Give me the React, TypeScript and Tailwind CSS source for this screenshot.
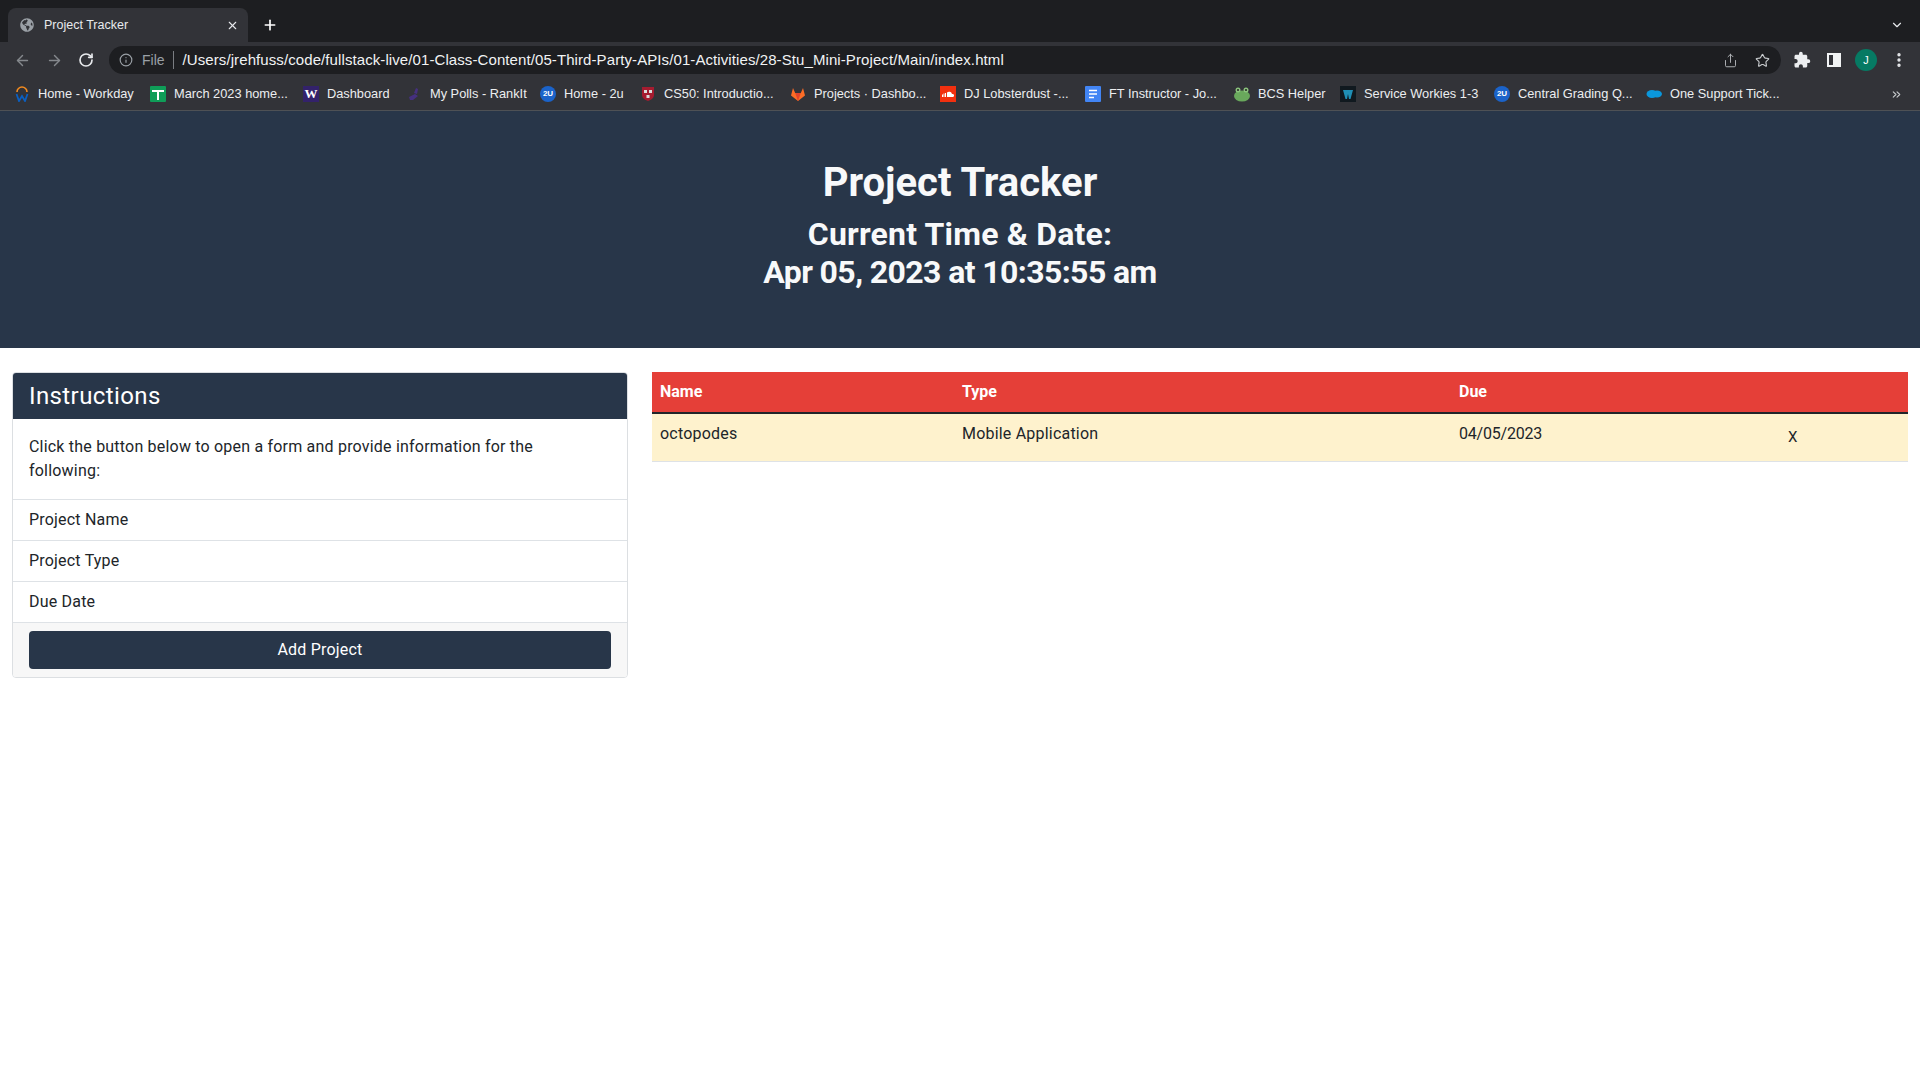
import React from "react";
import { ArrowLeft, ArrowRight, ChevronDown, ChevronsRight, EllipsisVertical, Info, Plus, RotateCw, Share, Star, X } from "lucide-react";
import { FaGlobeAmericas } from "react-icons/fa";
import { MdExtension } from "react-icons/md";

const TwoU = () => (
  <span className="flex h-4 w-4 items-center justify-center rounded-full bg-[#1b63c9] text-[8px] font-bold text-white">2U</span>
);

const bookmarks = [
  {
    label: "Home - Workday",
    width: "w-[136px]",
    icon: (
      <svg viewBox="0 0 16 16" className="h-4 w-4">
        <path d="M3 6a5 5 0 0 1 10 0" fill="none" stroke="#f38b1f" strokeWidth="1.6" />
        <path d="M2.5 8l2.5 7 3-5 3 5 2.500-7" fill="none" stroke="#0b5fc0" strokeWidth="1.8" />
      </svg>
    ),
  },
  {
    label: "March 2023 home...",
    width: "w-[153px]",
    icon: (
      <svg viewBox="0 0 16 16" className="h-4 w-4">
        <rect width="16" height="16" fill="#0f9d58" rx="1" />
        <path d="M2 4h12v2H9v8H7V6H2z" fill="#fff" />
      </svg>
    ),
  },
  {
    label: "Dashboard",
    width: "w-[103px]",
    icon: <span className="flex h-4 w-4 items-center justify-center bg-[#33226b] font-['Liberation_Serif',serif] text-[13px] font-bold text-white">W</span>,
  },
  {
    label: "My Polls - RankIt",
    width: "w-[134px]",
    icon: (
      <svg viewBox="0 0 16 16" className="h-4 w-4">
        <path d="M3 11l6-3 3 2-5 4H4zM8 7l2-5 2 1-1 5z" fill="#45307f" />
      </svg>
    ),
  },
  { label: "Home - 2u", width: "w-[100px]", icon: <TwoU /> },
  {
    label: "CS50: Introductio...",
    width: "w-[150px]",
    icon: (
      <svg viewBox="0 0 16 16" className="h-4 w-4">
        <path d="M2 1h12v8c0 3-3 5-6 6-3-1-6-3-6-6z" fill="#a51c30" />
        <rect x="4" y="4" width="3" height="3" fill="#ddd" />
        <rect x="9" y="4" width="3" height="3" fill="#ddd" />
        <rect x="6.500" y="9" width="3" height="3" fill="#ddd" />
      </svg>
    ),
  },
  {
    label: "Projects · Dashbo...",
    width: "w-[150px]",
    icon: (
      <svg viewBox="0 0 16 16" className="h-4 w-4">
        <path d="M8 15L1 9.500 3 2l2.200 5h5.600L13 2l2 7.500z" fill="#fc6d26" />
        <path d="M8 15L5.200 7h5.600z" fill="#e24329" />
      </svg>
    ),
  },
  {
    label: "DJ Lobsterdust -...",
    width: "w-[145px]",
    icon: (
      <svg viewBox="0 0 16 16" className="h-4 w-4">
        <rect width="16" height="16" fill="#f2300f" />
        <path d="M7 11V6.500a3 3 0 0 1 5 1.500 1.500 1.500 0 0 1 1 3z" fill="#fff" />
        <path d="M2.500 8.500v2.500M4 7.500V11M5.500 7v4" stroke="#fff" />
      </svg>
    ),
  },
  {
    label: "FT Instructor - Jo...",
    width: "w-[149px]",
    icon: (
      <svg viewBox="0 0 16 16" className="h-4 w-4">
        <rect width="16" height="16" fill="#4285f4" rx="1" />
        <path d="M4 4.500h8M4 8h8M4 11.500h5" stroke="#fff" strokeWidth="1.500" />
      </svg>
    ),
  },
  {
    label: "BCS Helper",
    width: "w-[106px]",
    icon: (
      <svg viewBox="0 0 16 16" className="h-4 w-4">
        <ellipse cx="8" cy="10" rx="8" ry="5.500" fill="#69a85c" />
        <circle cx="4" cy="4" r="2.500" fill="#8bc47d" />
        <circle cx="12" cy="4" r="2.500" fill="#8bc47d" />
        <circle cx="4" cy="4" r="1" fill="#222" />
        <circle cx="12" cy="4" r="1" fill="#222" />
      </svg>
    ),
  },
  {
    label: "Service Workies 1-3",
    width: "w-[154px]",
    icon: (
      <svg viewBox="0 0 16 16" className="h-4 w-4">
        <rect width="16" height="16" fill="#10191f" />
        <path d="M3 4h10l-2.500 9H9L8 8l-1 5H5.500z" fill="#1f8fb5" />
      </svg>
    ),
  },
  { label: "Central Grading Q...", width: "w-[152px]", icon: <TwoU /> },
  {
    label: "One Support Tick...",
    width: "w-[150px]",
    icon: (
      <svg viewBox="0 0 16 16" className="h-4 w-4">
        <ellipse cx="6" cy="8" rx="5.500" ry="4" fill="#0a97dc" />
        <ellipse cx="11" cy="8" rx="5" ry="3.500" fill="#0a97dc" />
      </svg>
    ),
  },
];

const listItems = ["Project Name", "Project Type", "Due Date"];

const BrowserChrome = () => (
  <div className="font-['Liberation_Sans',sans-serif] text-white">
    {/* tabs */}
    <div className="flex h-[42px] items-end bg-[#1d1e21] pl-2">
      <div className="flex h-[34px] w-[240px] items-center rounded-t-lg bg-[#323338] pl-[12px] pr-[9px] text-[12.5px] text-[#e8eaed]">
        <FaGlobeAmericas className="h-[14px] w-[14px] text-[#9aa0a6]" />
        <span className="ml-[10px] flex-1">Project Tracker</span>
        <X className="h-[13px] w-[13px]" strokeWidth={2} />
      </div>
      <Plus className="mb-[9px] ml-[14px] h-[16px] w-[16px]" strokeWidth={2.500} />
      <ChevronDown className="mb-[10px] ml-auto mr-[16px] h-[14px] w-[14px] text-[#e8eaed]" strokeWidth={2} />
    </div>
    {/* toolbar */}
    <div className="flex h-[36px] items-center bg-[#323338] pl-[14px] pr-[10px]">
      <ArrowLeft className="h-[17px] w-[17px] text-[#85888d]" strokeWidth={2} />
      <ArrowRight className="ml-[15px] h-[17px] w-[17px] text-[#85888d]" strokeWidth={2} />
      <RotateCw className="ml-[15px] h-[16px] w-[16px] text-[#e8eaed]" strokeWidth={2.500} />
      <div className="ml-[15px] flex h-[28px] w-[1672px] shrink-0 items-center rounded-full bg-[#1d1e21] pl-[10px] pr-[11px] text-[14px]">
        <Info className="h-[14px] w-[14px] text-[#9aa0a6]" strokeWidth={2} />
        <span className="ml-[9px] text-[#9aa0a6]">File</span>
        <span className="ml-[8px] h-[18px] w-px bg-[#7a7d82]" />
        <span className="ml-[9px] flex-1 text-[15px] tracking-[0.09px] text-[#f1f3f4]">/Users/jrehfuss/code/fullstack-live/01-Class-Content/05-Third-Party-APIs/01-Activities/28-Stu_Mini-Project/Main/index.html</span>
        <Share className="h-[15px] w-[15px] text-[#b4b7bb]" strokeWidth={1.500} />
        <Star className="ml-[17px] h-[15px] w-[15px] text-[#c8cbce]" strokeWidth={1.800} />
      </div>
      <MdExtension className="ml-[12px] h-[18px] w-[18px] text-[#eceef0]" />
      <span className="ml-[16px] flex h-[14px] w-[14px] items-center justify-end border-[2px] border-[#f1f3f4]">
        <span className="h-full w-[6px] bg-[#f1f3f4]" />
      </span>
      <span className="ml-[14px] flex h-[22px] w-[22px] items-center justify-center rounded-full bg-[#067a63] text-[11px] text-white">J</span>
      <EllipsisVertical className="ml-[13px] h-[18px] w-[18px] text-[#e8eaed]" strokeWidth={2.500} />
    </div>
    {/* bookmarks */}
    <div className="flex h-[32px] items-center bg-[#323338] pl-[14px] text-[12.8px] text-[#eceef0]">
      {bookmarks.map((b) => (
        <div key={b.label} className={`flex shrink-0 items-center gap-2 ${b.width}`}>
          {b.icon}
          <span className="whitespace-nowrap">{b.label}</span>
        </div>
      ))}
      <ChevronsRight className="ml-auto mr-[17px] h-[13px] w-[13px] text-[#c8cbce]" />
    </div>
  </div>
);

export default function App() {
  return (
    <div className="min-h-screen bg-white">
      <BrowserChrome />
      <div className="h-px bg-[#4e5155]" />
      <div className="font-['Roboto',sans-serif] text-[#212529]">
        <header className="flex h-[237px] flex-col items-center justify-center bg-[#283649] pb-[10px] text-[#f8f9fa]">
          <h1 className="text-[40px] font-bold leading-[48px]">Project Tracker</h1>
          <p className="mt-[8px] text-center text-[32px] font-bold leading-[38px]">
            <span className="tracking-[0.2px]">Current Time &amp; Date:</span>
            <br />
            <span className="tracking-[-0.6px]">Apr 05, 2023 at 10:35:55 am</span>
          </p>
        </header>
        <main className="flex gap-[24px] px-[12px] pt-[24px] tracking-[0.2px]">
          <section className="w-[616px] shrink-0 overflow-hidden rounded-[4px] border border-[#dcdfe2]">
            <h2 className="flex h-[46px] items-center bg-[#283649] px-[16px] text-[24px] leading-[29px] tracking-[0.4px] text-white">Instructions</h2>
            <p className="pb-[16px] pl-[16px] pr-[70px] pt-[16px] text-[16px] leading-[24px]">
              Click the button below to open a form and provide information for the following:
            </p>
            <ul>
              {listItems.map((item) => (
                <li key={item} className="flex h-[41px] items-center border-t border-[#dee2e6] px-[16px] text-[16px]">
                  {item}
                </li>
              ))}
            </ul>
            <div className="border-t border-[#dee2e6] bg-[#f7f7f7] px-[16px] py-[8px]">
              <button className="h-[38px] w-full rounded-[4px] bg-[#283649] text-[16px] text-white">Add Project</button>
            </div>
          </section>
          <table className="h-fit w-[1256px] table-fixed border-collapse text-left text-[16px]">
            <thead>
              <tr className="h-[41px] border-b-2 border-[#212529] bg-[#e53f38] tracking-normal text-white">
                <th className="w-[302px] px-[8px] font-bold">Name</th>
                <th className="w-[497px] px-[8px] font-bold">Type</th>
                <th className="w-[329px] px-[8px] font-bold">Due</th>
                <th className="px-[8px]" />
              </tr>
            </thead>
            <tbody>
              <tr className="h-[48px] border-b border-[#dee2e6] bg-[#fef2cd]">
                <td className="px-[8px] pb-[6px]">octopodes</td>
                <td className="px-[8px] pb-[6px]">Mobile Application</td>
                <td className="px-[8px] pb-[6px] tracking-[-0.2px]">04/05/2023</td>
                <td className="px-[8px] text-[15px]">X</td>
              </tr>
            </tbody>
          </table>
        </main>
      </div>
    </div>
  );
}
